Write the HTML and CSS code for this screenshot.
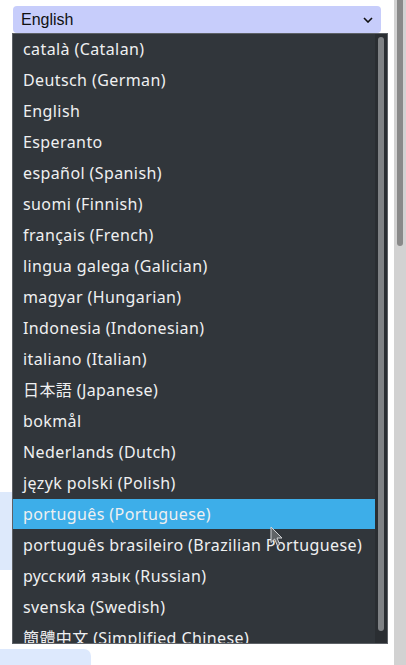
FILE: index.html
```html
<!DOCTYPE html>
<html>
<head>
<meta charset="utf-8">
<link rel="stylesheet" href="styles.css">
</head>
<body>
<div class="page">
  <div class="lang-select">
    <span class="lang-value">English</span>
    <svg class="chevron" width="10" height="6" viewBox="0 0 10 6"><path d="M1 1 L5 5 L9 1" fill="none" stroke="#111" stroke-width="1.6"/></svg>
  </div>
  <div class="card"></div>
  <div class="tab"></div>
</div>

<div class="popup">
  <div class="options">
    <div class="opt">català (Catalan)</div>
    <div class="opt">Deutsch (German)</div>
    <div class="opt">English</div>
    <div class="opt">Esperanto</div>
    <div class="opt">español (Spanish)</div>
    <div class="opt">suomi (Finnish)</div>
    <div class="opt">français (French)</div>
    <div class="opt">lingua galega (Galician)</div>
    <div class="opt">magyar (Hungarian)</div>
    <div class="opt">Indonesia (Indonesian)</div>
    <div class="opt">italiano (Italian)</div>
    <div class="opt">日本語 (Japanese)</div>
    <div class="opt">bokmål</div>
    <div class="opt">Nederlands (Dutch)</div>
    <div class="opt">język polski (Polish)</div>
    <div class="opt active">português (Portuguese)</div>
    <div class="opt">português brasileiro (Brazilian Portuguese)</div>
    <div class="opt">русский язык (Russian)</div>
    <div class="opt">svenska (Swedish)</div>
    <div class="opt">簡體中文 (Simplified Chinese)</div>
  </div>
  <div class="popup-track"><div class="popup-thumb"></div></div>
</div>

<div class="page-scroll"><div class="page-thumb"></div></div>

<svg class="cursor" width="14" height="22" viewBox="0 0 14 22">
  <path d="M1 1 L1 16.5 L4.6 13 L7.4 19.5 L9.8 18.5 L7 12 L12 12 Z" fill="#5f6366" stroke="#d0d2d4" stroke-width="1" stroke-linejoin="round"/>
</svg>
</body>
</html>
```

FILE: styles.css
```css
html, body {
  margin: 0;
  padding: 0;
  background: #ffffff;
  width: 406px;
  height: 665px;
  overflow: hidden;
  position: relative;
}

.page {
  padding-top: 6px;
  display: flex;
  flex-direction: column;
}

.lang-select {
  margin-left: 13px;
  width: 368px;
  height: 27px;
  box-sizing: border-box;
  background: #c7cdfb;
  border-radius: 4px;
  display: flex;
  align-items: center;
  justify-content: space-between;
  padding: 0 8px 0 8px;
  font-family: "Liberation Sans", Arial, sans-serif;
  font-size: 16px;
  color: #111;
}

.lang-value {
  padding-top: 1px;
}

.chevron {
  margin-top: 1px;
}

.card {
  margin-top: 459px;
  width: 200px;
  height: 78px;
  background: #dde9fb;
  border-radius: 0 6px 6px 0;
}

.tab {
  margin-top: 79px;
  width: 91px;
  height: 30px;
  background: #dde9fd;
  border-radius: 0 7px 0 0;
}

.popup {
  position: absolute;
  left: 12px;
  top: 33px;
  width: 376px;
  height: 611px;
  box-sizing: border-box;
  background: #31363b;
  border: 1px solid #5d6166;
  display: flex;
  overflow: hidden;
}

.options {
  flex: 1;
  display: flex;
  flex-direction: column;
  min-width: 0;
}

.opt {
  height: 31px;
  flex-shrink: 0;
  line-height: 30px;
  padding-left: 10px;
  font-family: "Noto Sans", "Noto Sans CJK JP", sans-serif;
  font-size: 16px;
  letter-spacing: 0.4px;
  color: #eff0f1;
  white-space: nowrap;
  box-sizing: border-box;
}

.opt.active {
  background: #3daee9;
  height: 30px;
  margin-bottom: 1px;
}

.popup-track {
  width: 12px;
  background: #2a2e32;
  display: flex;
  justify-content: center;
  padding-top: 3px;
  box-sizing: border-box;
}

.popup-thumb {
  width: 6px;
  height: 594px;
  background: #7f8285;
  border-radius: 3px;
}

.page-scroll {
  position: absolute;
  right: 0;
  top: 0;
  width: 12px;
  height: 665px;
  background: #d2d2d2;
  display: flex;
  justify-content: center;
}

.page-thumb {
  width: 6px;
  height: 246px;
  background: #898989;
  border-radius: 0 0 3px 3px;
}

.cursor {
  position: absolute;
  left: 270px;
  top: 526px;
}
```
